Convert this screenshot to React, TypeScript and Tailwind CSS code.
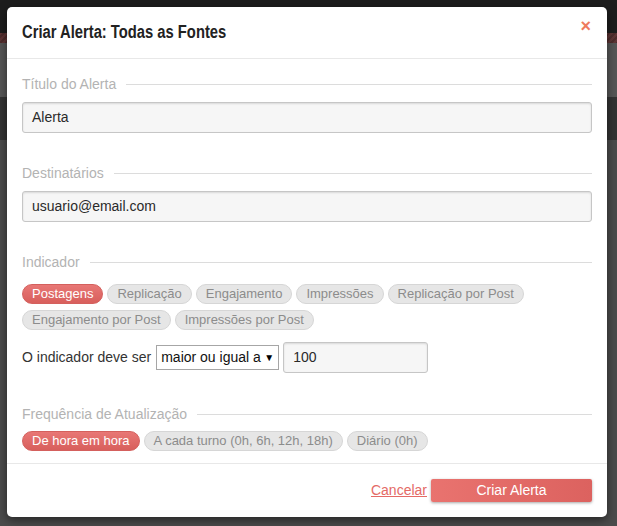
import React from "react";

const indicadores = [
  "Postagens",
  "Replicação",
  "Engajamento",
  "Impressões",
  "Replicação por Post",
  "Engajamento por Post",
  "Impressões por Post",
];

const frequencias = ["De hora em hora", "A cada turno (0h, 6h, 12h, 18h)", "Diário (0h)"];

function SectionLabel({ children }: { children: React.ReactNode }) {
  return (
    <div className="flex h-5 items-center gap-[10px]">
      <span className="text-[14px] leading-5 text-[#b3b3b3]">{children}</span>
      <div className="h-px flex-1 bg-[#dcdcdc]" />
    </div>
  );
}

function Chip({ label, active }: { label: string; active?: boolean }) {
  return (
    <span
      className={
        active
          ? "inline-flex h-5 items-center rounded-full border border-[#d4605d] bg-gradient-to-b from-[#e87775] to-[#d85f5c] px-[9px] text-[13px] text-white"
          : "inline-flex h-5 items-center rounded-full border border-[#d6d6d6] bg-[#e6e6e6] px-[9px] text-[13px] text-[#8c8c8c]"
      }
    >
      {label}
    </span>
  );
}

function TextInput({ value, className }: { value: string; className?: string }) {
  return (
    <div
      className={
        "flex h-[31px] items-center rounded-[3px] border border-[#c6c6c6] bg-[#f6f6f6] px-[9px] text-[14px] text-[#2a2a2a] shadow-[inset_0_1px_2px_rgba(0,0,0,0.12)] " +
        (className ?? "")
      }
    >
      {value}
    </div>
  );
}

export default function App() {
  return (
    <div className="relative h-[526px] w-[617px] overflow-hidden bg-[#4a4a4a] font-['Liberation_Sans',Arial,sans-serif]">
      {/* Background page behind the overlay */}
      <div className="flex h-full flex-col">
        <div className="h-[33px] bg-[#1d1d1d]" />
        <div className="h-[10px] bg-[repeating-linear-gradient(135deg,#5e3535_0px,#5e3535_2px,#4e2c2c_2px,#4e2c2c_4px)]" />
        <div className="h-[54px] bg-[#565656]" />
        <div className="h-[43px] bg-[#333333]" />
        <div className="flex-1 bg-[#4b4b4b]" />
      </div>

      {/* Modal */}
      <div className="absolute left-[7px] top-[7px] flex h-[510px] w-[600px] flex-col rounded-[5px] bg-white shadow-[0_3px_10px_rgba(0,0,0,0.5)]">
        <div className="flex h-[52px] items-center justify-between border-b border-[#e8e8e8] px-[15px]">
          <h2 className="origin-left scale-x-[0.82] whitespace-nowrap text-[18px] font-bold text-[#222]">
            Criar Alerta: Todas as Fontes
          </h2>
          <span className="-mt-[13px] mr-[1px] text-[18px] font-bold leading-none text-[#ee7b5e]">×</span>
        </div>

        <div className="flex flex-1 flex-col px-[15px] pt-[15px]">
          <SectionLabel>Título do Alerta</SectionLabel>
          <TextInput value="Alerta" className="mt-2" />

          <div className="mt-[30px]">
            <SectionLabel>Destinatários</SectionLabel>
          </div>
          <TextInput value="usuario@email.com" className="mt-2" />

          <div className="mt-[30px]">
            <SectionLabel>Indicador</SectionLabel>
          </div>
          <div className="mt-3 flex flex-wrap gap-x-1 gap-y-[6px]">
            {indicadores.map((i, idx) => (
              <Chip key={i} label={i} active={idx === 0} />
            ))}
          </div>

          <div className="mt-3 flex items-center text-[14px] text-[#333]">
            <span>O indicador deve ser</span>
            <div className="ml-[5px] flex h-[25px] w-[123px] items-center justify-between border border-[#a6a6a6] bg-white pl-[4px] pr-[4px]">
              <span className="text-[14px] text-[#111]">maior ou igual a</span>
              <span className="text-[10px] text-black">▼</span>
            </div>
            <TextInput value="100" className="ml-[4px] w-[145px]" />
          </div>

          <div className="mt-[31px]">
            <SectionLabel>Frequência de Atualização</SectionLabel>
          </div>
          <div className="mt-[7px] flex flex-wrap gap-1">
            {frequencias.map((f, idx) => (
              <Chip key={f} label={f} active={idx === 0} />
            ))}
          </div>
        </div>

        <div className="flex h-[54px] items-center justify-end gap-1 border-t border-[#e8e8e8] px-[15px]">
          <a href="#" className="text-[14px] text-[#e46a66] underline">
            Cancelar
          </a>
          <button className="h-[23px] w-[161px] rounded-[2px] bg-gradient-to-r from-[#e9736f] to-[#dc625f] text-[14px] text-white shadow-[0_1px_3px_rgba(0,0,0,0.35)]">
            Criar Alerta
          </button>
        </div>
      </div>
    </div>
  );
}
